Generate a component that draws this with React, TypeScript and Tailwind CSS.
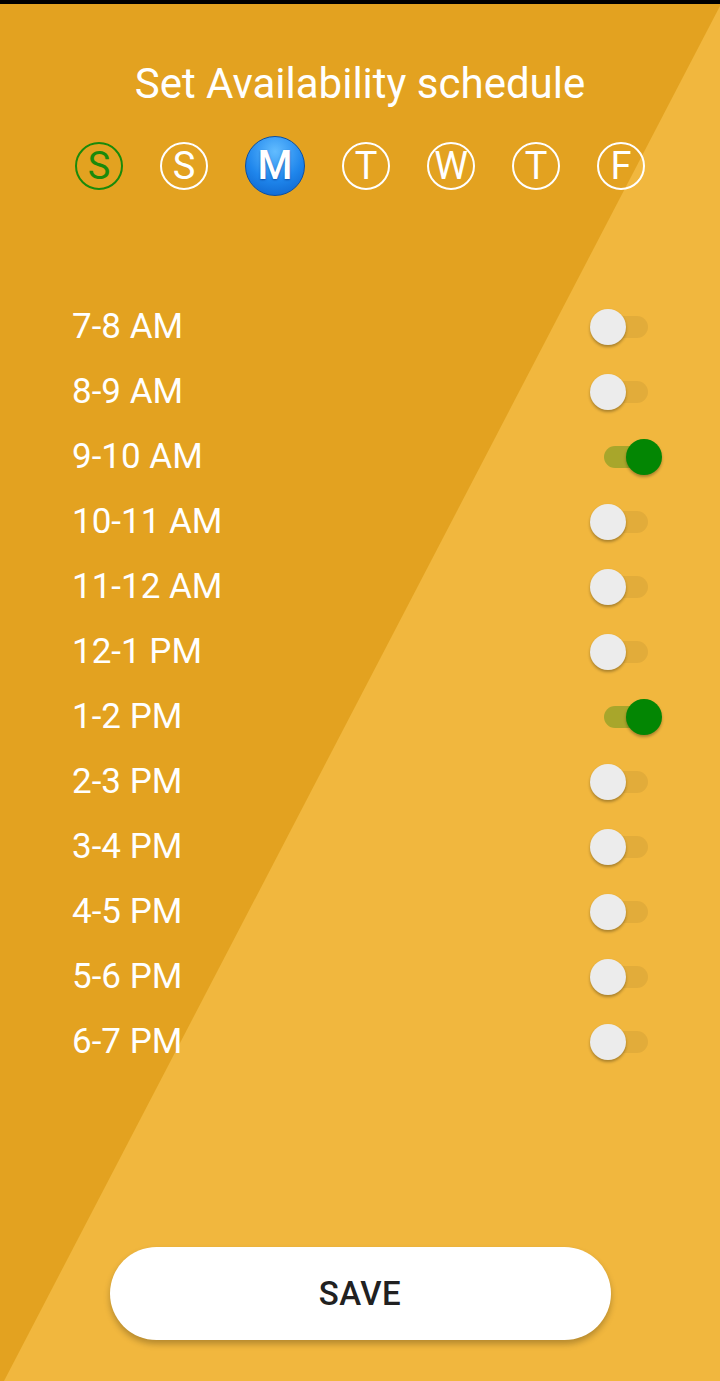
const slots = [
  { label: "7-8 AM", on: false },
  { label: "8-9 AM", on: false },
  { label: "9-10 AM", on: true },
  { label: "10-11 AM", on: false },
  { label: "11-12 AM", on: false },
  { label: "12-1 PM", on: false },
  { label: "1-2 PM", on: true },
  { label: "2-3 PM", on: false },
  { label: "3-4 PM", on: false },
  { label: "4-5 PM", on: false },
  { label: "5-6 PM", on: false },
  { label: "6-7 PM", on: false },
];

const days = ["S", "S", "M", "T", "W", "T", "F"];

const Toggle = ({ on }: { on: boolean }) => {
  return (
    <div className="relative w-[72px] h-[36px]">
      <div
        className={
          on
            ? "absolute left-[14px] top-[7px] w-[44px] h-[22px] rounded-full bg-[#008000]/30"
            : "absolute left-[14px] top-[7px] w-[44px] h-[22px] rounded-full bg-black/[0.06]"
        }
      ></div>
      <div
        className={
          on
            ? "absolute top-0 left-[36px] w-[36px] h-[36px] rounded-full bg-[#038603] shadow-[0_2px_3px_rgba(0,0,0,0.3)]"
            : "absolute top-0 left-0 w-[36px] h-[36px] rounded-full bg-[#ececec] shadow-[0_2px_3px_rgba(0,0,0,0.3)]"
        }
      ></div>
    </div>
  );
};

const DayBadge = ({ letter, index }: { letter: string; index: number }) => {
  // selected day (Monday) uses the blue emoji-style circle
  if (index === 2) {
    return (
      <div className="w-[60px] h-[60px] rounded-full border border-[#0b4fa3] bg-[radial-gradient(circle_at_50%_25%,#62bcff_0%,#1f86ec_55%,#0b5fc8_100%)] flex items-center justify-center text-white text-[40px] font-medium leading-none [text-shadow:0_1px_2px_rgba(0,40,120,0.6)]">
        {letter}
      </div>
    );
  }

  return (
    <div
      className={
        index === 0
          ? "w-[48px] h-[48px] rounded-full border-2 border-[#1a8a0a] text-[#1a8a0a] flex items-center justify-center text-[38px] leading-none"
          : "w-[48px] h-[48px] rounded-full border-2 border-white text-white flex items-center justify-center text-[38px] leading-none"
      }
    >
      {letter}
    </div>
  );
};

const App = () => {
  return (
    <div className="relative w-[720px] h-[1381px] overflow-hidden bg-[#e3a220] font-['Roboto','Liberation_Sans',sans-serif]">
      {/* background diagonal */}
      <svg
        className="absolute inset-0 w-full h-full"
        viewBox="0 0 720 1381"
        preserveAspectRatio="none"
      >
        <polygon points="720,6 720,1381 4,1381" fill="#f1b73e" />
      </svg>

      <div className="relative flex flex-col">
        <div className="h-[4px] bg-black"></div>

        <h1 className="mt-[56px] text-center text-white text-[42px] leading-[48px]">
          Set Availability schedule
        </h1>

        {/* week days */}
        <div className="mt-[28px] flex items-center justify-center gap-[37px] h-[60px]">
          {days.map((d, i) => (
            <DayBadge letter={d} index={i} key={i} />
          ))}
        </div>

        {/* time slots */}
        <div className="mt-[98px] flex flex-col">
          {slots.map((slot) => (
            <div
              key={slot.label}
              className="h-[65px] flex items-center justify-between pl-[72px] pr-[58px]"
            >
              <span className="text-white text-[35px] leading-none">
                {slot.label}
              </span>
              <Toggle on={slot.on} />
            </div>
          ))}
        </div>

        <div className="mt-[173px] flex justify-center">
          <button className="w-[501px] h-[93px] rounded-full bg-white shadow-[0_4px_6px_rgba(0,0,0,0.25)] text-[#212121] text-[33px] font-medium tracking-[0.5px]">
            SAVE
          </button>
        </div>
      </div>
    </div>
  );
};

export default App;
